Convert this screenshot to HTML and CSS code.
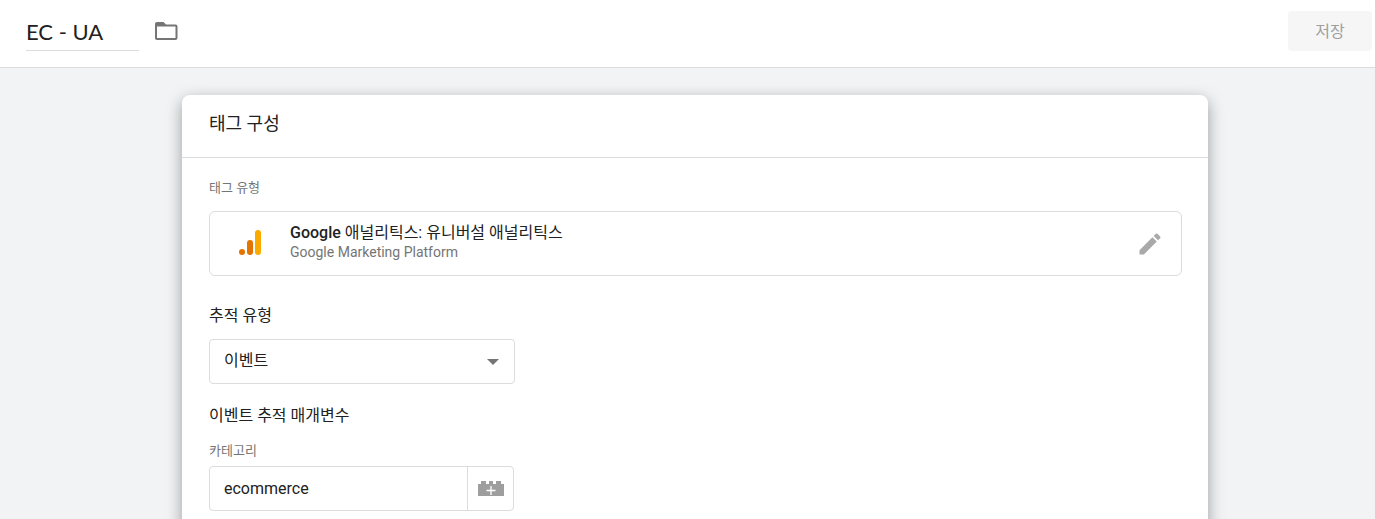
FILE: index.html
```html
<!DOCTYPE html>
<html lang="ko">
<head>
    <meta charset="UTF-8">
    <meta name="viewport" content="width=device-width, initial-scale=1.0">
    <title>EC - UA</title>
    <link rel="stylesheet" href="styles.css">
</head>
<body>
    <header class="header">
        <input class="tag-name" type="text" value="EC - UA" aria-label="태그 이름">
        <button class="icon-button" type="button" aria-label="폴더">
            <svg width="24" height="20" viewBox="0 0 24 20" fill="#757575">
                <path d="M3 1C1.800 1 1 1.800 1 3v14c0 1.200.8 2 2 2h18.500c1.200 0 2-.8 2-2V5.500c0-1.200-.8-2-2-2H12L9.500 1zM3 5.500h18.500V17H3z" fill-rule="evenodd"></path>
            </svg>
        </button>
        <button class="save-button" type="button" disabled>저장</button>
    </header>

    <main class="content">
        <section class="card">
            <h1 class="card-title">태그 구성</h1>
            <div class="card-body">
                <div class="caption">태그 유형</div>
                <div class="tag-type">
                    <svg class="tag-logo" width="24" height="26" viewBox="0 0 24 26">
                        <circle cx="4" cy="22" r="3" fill="#e37400"></circle>
                        <rect x="9" y="10" width="6" height="15" rx="3" fill="#e37400"></rect>
                        <rect x="17" y="0" width="6" height="25" rx="3" fill="#f9ab00"></rect>
                    </svg>
                    <div class="tag-text">
                        <div class="tag-label"><b>Google</b> 애널리틱스: 유니버설 애널리틱스</div>
                        <div class="tag-vendor">Google Marketing Platform</div>
                    </div>
                    <button class="icon-button" type="button" aria-label="수정">
                        <svg width="28" height="28" viewBox="0 0 24 24" fill="#a9a9a9">
                            <path d="M3 17.250V21h3.750L17.810 9.940l-3.750-3.750zM20.710 7.040a1 1 0 0 0 0-1.410l-2.340-2.340a1 1 0 0 0-1.410 0l-1.830 1.830 3.750 3.750z"></path>
                        </svg>
                    </button>
                </div>

                <label class="subtitle" for="track-type">추적 유형</label>
                <div class="select-wrap">
                    <select class="select" id="track-type">
                        <option selected>이벤트</option>
                    </select>
                    <svg class="select-arrow" width="12" height="6" viewBox="0 0 12 6" fill="#757575">
                        <path d="M0 0h12L6 6z"></path>
                    </svg>
                </div>

                <h2 class="subtitle">이벤트 추적 매개변수</h2>
                <label class="caption" for="category">카테고리</label>
                <div class="field">
                    <input class="field-input" id="category" type="text" value="ecommerce">
                    <button class="field-button" type="button" aria-label="변수 선택">
                        <svg width="26" height="16" viewBox="0 0 26 16">
                            <path d="M0 3h3V0h5v3h3V0h4v3h3V0h5v3h3v12H0z" fill="#9e9e9e"></path>
                            <path d="M13 5v9M8.500 9.500h9" stroke="#fff" stroke-width="1.300"></path>
                        </svg>
                    </button>
                </div>
            </div>
        </section>
    </main>
</body>
</html>
```

FILE: styles.css
```css
* {
    box-sizing: border-box;
}

body {
    margin: 0;
    height: 100vh;
    display: flex;
    flex-direction: column;
    overflow: hidden;
    background-color: #f1f3f4;
    color: #212121;
    font-family: Roboto, "Noto Sans CJK KR", sans-serif;
    font-size: 16px;
}

input, select, button {
    font-family: inherit;
    font-size: inherit;
    color: inherit;
}

button {
    cursor: pointer;
}

.header {
    display: flex;
    align-items: center;
    height: 68px;
    padding: 0 3px 5px 26px;
    background-color: #fff;
    border-bottom: 1px solid #dadce0;
    flex-shrink: 0;
}

.tag-name {
    width: 113px;
    height: 40px;
    margin-right: 15px;
    padding: 2px 0 0;
    border: 0;
    border-bottom: 1px solid #dadce0;
    font-family: Lato, sans-serif;
    font-size: 22px;
    outline: none;
}

.icon-button {
    display: flex;
    padding: 0;
    border: 0;
    background: none;
}

.save-button {
    width: 84px;
    height: 40px;
    margin-left: auto;
    padding: 0 0 2px;
    border: 0;
    border-radius: 4px;
    background-color: #f6f6f6;
    color: #9e9e9e;
    cursor: default;
}

.content {
    flex: 1;
    display: flex;
    padding: 27px 167px 0 182px;
}

.card {
    flex: 1;
    background-color: #fff;
    border-radius: 8px 8px 0 0;
    box-shadow: 0 5px 16px rgba(0, 0, 0, 0.36);
}

.card-title {
    height: 63px;
    margin: 0;
    padding: 15px 27px;
    border-bottom: 1px solid #dadce0;
    font-size: 18px;
    font-weight: 400;
    line-height: 28px;
}

.card-body {
    padding: 20px 26px 20px 27px;
}

.caption {
    display: block;
    color: #757575;
    font-size: 13px;
    line-height: 20px;
}

.tag-type {
    display: flex;
    align-items: center;
    height: 65px;
    margin: 13px 0 26px;
    padding: 0 17px 0 28px;
    border: 1px solid #dadce0;
    border-radius: 6px;
}

.tag-logo {
    margin-bottom: 2px;
}

.tag-text {
    flex: 1;
    margin-left: 28px;
    padding-bottom: 4px;
}

.tag-label {
    line-height: 20px;
}

.tag-label b {
    font-weight: 500;
}

.tag-vendor {
    color: #757575;
    font-size: 14px;
    line-height: 18px;
}

.subtitle {
    display: block;
    margin: 0;
    font-size: 16px;
    font-weight: 400;
    line-height: 28px;
}

.select-wrap {
    position: relative;
    width: 306px;
    margin: 9px 0 18px;
}

.select {
    display: block;
    width: 100%;
    height: 45px;
    padding: 0 14px 2px;
    border: 1px solid #dadce0;
    border-radius: 4px;
    background-color: #fff;
    appearance: none;
}

.select-arrow {
    position: absolute;
    top: 20px;
    right: 16px;
    pointer-events: none;
}

.subtitle + .caption {
    margin: 11px 0 5px;
}

.field {
    display: flex;
    width: 305px;
    height: 45px;
    border: 1px solid #dadce0;
    border-radius: 4px;
}

.field-input {
    flex: 1;
    min-width: 0;
    padding: 0 14px;
    border: 0;
    background: none;
    outline: none;
}

.field-button {
    display: flex;
    align-items: center;
    justify-content: center;
    width: 46px;
    padding: 0;
    border: 0;
    border-left: 1px solid #dadce0;
    background: none;
}
```
